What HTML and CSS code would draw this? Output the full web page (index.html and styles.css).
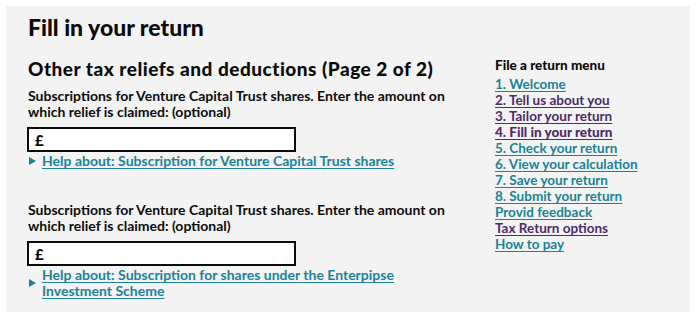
FILE: index.html
```html
<!DOCTYPE html>
<html lang="en">
<head>
<meta charset="utf-8">
<title>Fill in your return</title>
<link rel="stylesheet" href="styles.css">
</head>
<body>
<div class="panel">
  <main class="main">
    <h1 class="title">Fill in your return</h1>
    <h2 class="subtitle">Other tax reliefs and deductions (Page 2 of 2)</h2>

    <div class="field">
      <label class="label" for="vct1">Subscriptions for Venture Capital Trust shares. Enter the amount on which relief is claimed: (optional)</label>
      <div class="input"><span class="currency">£</span><input id="vct1" type="text"></div>
      <div class="help"><span class="arrow"></span><a href="#" class="help-link">Help about: Subscription for Venture Capital Trust shares</a></div>
    </div>

    <div class="field field-second">
      <label class="label" for="vct2">Subscriptions for Venture Capital Trust shares. Enter the amount on which relief is claimed: (optional)</label>
      <div class="input"><span class="currency">£</span><input id="vct2" type="text"></div>
      <div class="help help-multi"><span class="arrow"></span><a href="#" class="help-link">Help about: Subscription for shares under the Enterpipse Investment Scheme</a></div>
    </div>
  </main>

  <nav class="menu">
    <h3 class="menu-title">File a return menu</h3>
    <ul class="menu-list">
      <li><a href="#" class="link">1. Welcome</a></li>
      <li><a href="#" class="link visited">2. Tell us about you</a></li>
      <li><a href="#" class="link visited">3. Tailor your return</a></li>
      <li><a href="#" class="link visited current">4. Fill in your return</a></li>
      <li><a href="#" class="link">5. Check your return</a></li>
      <li><a href="#" class="link">6. View your calculation</a></li>
      <li><a href="#" class="link">7. Save your return</a></li>
      <li><a href="#" class="link">8. Submit your return</a></li>
      <li><a href="#" class="link">Provid feedback</a></li>
      <li><a href="#" class="link visited">Tax Return options</a></li>
      <li><a href="#" class="link">How to pay</a></li>
    </ul>
  </nav>
</div>
</body>
</html>
```

FILE: styles.css
```css
* { box-sizing: border-box; }

html, body {
  margin: 0;
  padding: 0;
  background: #ffffff;
}

body {
  font-family: Lato, "Open Sans", sans-serif;
  color: #0b0c0c;
}

.panel {
  margin: 6px;
  width: 684px;
  height: 306px;
  background: #f3f3f3;
  display: flex;
  padding: 0 0 0 22px;
}

.main {
  width: 445px;
  flex: none;
}

.title {
  margin: 0;
  padding-top: 7px;
  font-size: 23px;
  font-weight: 900;
  line-height: 28px;
}

.subtitle {
  margin: 0;
  padding-top: 16px;
  font-size: 19px;
  font-weight: 900;
  line-height: 24px;
  letter-spacing: 0.5px;
}

.field {
  padding-top: 7px;
}

.field-second {
  padding-top: 33px;
}

.label {
  display: block;
  font-size: 14px;
  font-weight: 700;
  line-height: 16px;
}

.input {
  margin-top: 7px;
  margin-left: -1px;
  width: 269px;
  height: 25px;
  border: 2px solid #0b0c0c;
  background: #ffffff;
  display: flex;
  align-items: center;
  padding-left: 6px;
}

.currency {
  font-size: 15px;
  font-weight: 900;
}

.input input {
  border: 0;
  outline: 0;
  background: transparent;
  flex: 1;
  min-width: 0;
  height: 100%;
  padding: 0 4px;
  font: inherit;
}

.help {
  display: flex;
  align-items: center;
  gap: 6px;
  margin-top: 1px;
  font-size: 14px;
  line-height: 16px;
}

.arrow {
  width: 0;
  height: 0;
  border-left: 7px solid #1d8296;
  border-top: 4px solid transparent;
  border-bottom: 4px solid transparent;
  flex: none;
  margin-left: 1px;
}

.help-multi .help-link {
  width: 360px;
}

.help-link {
  color: #1d8296;
  font-weight: 700;
  text-decoration: underline;
  text-underline-offset: 2px;
}

.menu {
  margin-left: 22px;
  padding-top: 50px;
}

.menu-title {
  margin: 0;
  font-size: 13.5px;
  font-weight: 900;
  line-height: 18px;
}

.menu-list {
  list-style: none;
  margin: 2px 0 0;
  padding: 0;
}

.menu-list li {
  font-size: 13.5px;
  line-height: 16px;
}

.link {
  color: #1d8296;
  font-weight: 700;
  text-decoration: underline;
  text-underline-offset: 2px;
}

.link.visited {
  color: #4c2c69;
}

.link.current {
  font-weight: 900;
}
```
